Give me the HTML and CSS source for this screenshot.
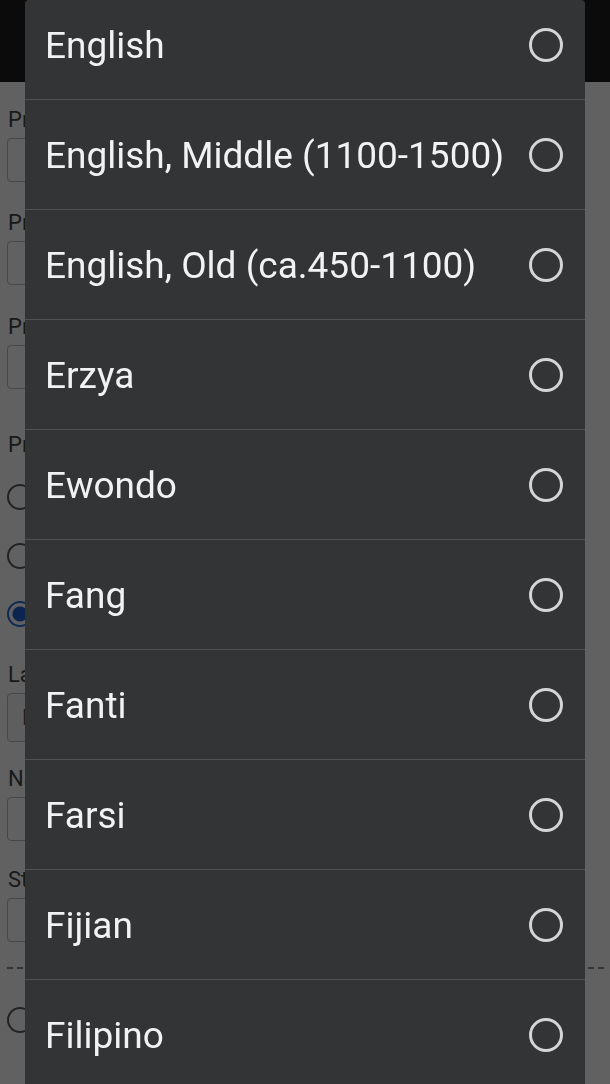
FILE: index.html
```html
<!DOCTYPE html>
<html lang="en">
<head>
<meta charset="utf-8">
<title>Language</title>
<link rel="stylesheet" href="styles.css">
</head>
<body>
<div class="page">
  <header class="topbar"></header>
  <form class="form">
    <label class="lbl l1">Preferred name</label>
    <div class="input"></div>
    <label class="lbl l2">Pronouns</label>
    <div class="input"></div>
    <label class="lbl l3">Preferred contact</label>
    <div class="input"></div>
    <label class="lbl l4">Primary method</label>
    <div class="radio r1"></div>
    <div class="radio r2"></div>
    <div class="radio r3 on"></div>
    <label class="lbl l5">Language</label>
    <div class="input select"><span class="val">F</span></div>
    <label class="lbl l6">Nationality</label>
    <div class="input"></div>
    <label class="lbl l7">Status</label>
    <div class="input"></div>
    <div class="dash"></div>
    <div class="radio r4"></div>
  </form>
</div>
<div class="scrim"></div>
<div class="dialog">
  <ul class="list">
    <li class="row"><span class="name">English</span><span class="rb"></span></li>
    <li class="row"><span class="name">English, Middle (1100-1500)</span><span class="rb"></span></li>
    <li class="row"><span class="name">English, Old (ca.450-1100)</span><span class="rb"></span></li>
    <li class="row"><span class="name">Erzya</span><span class="rb"></span></li>
    <li class="row"><span class="name">Ewondo</span><span class="rb"></span></li>
    <li class="row"><span class="name">Fang</span><span class="rb"></span></li>
    <li class="row"><span class="name">Fanti</span><span class="rb"></span></li>
    <li class="row"><span class="name">Farsi</span><span class="rb"></span></li>
    <li class="row"><span class="name">Fijian</span><span class="rb"></span></li>
    <li class="row"><span class="name">Filipino</span><span class="rb"></span></li>
  </ul>
</div>
</body>
</html>
```
FILE: styles.css
```css
html, body {
  margin: 0;
  padding: 0;
  height: 100%;
  overflow: hidden;
  background: #ffffff;
  font-family: Roboto, "Noto Sans", sans-serif;
}
.page {
  display: flex;
  flex-direction: column;
}
.topbar {
  height: 82px;
  background: #1d1d1d;
}
.form {
  display: flex;
  flex-direction: column;
  padding: 25px 7px 0 7px;
}
.lbl {
  display: block;
  font-size: 22px;
  line-height: 26px;
  height: 26px;
  color: #444444;
  padding-left: 1px;
}
.input {
  height: 42px;
  border: 1px solid #bdbdbd;
  border-radius: 4px;
  margin-top: 5px;
  width: 560px;
  box-sizing: content-box;
}
.select {
  height: 47px;
  display: flex;
  align-items: center;
  padding-left: 14px;
  width: 546px;
  background: #f6f6f6;
}
.val {
  font-size: 22px;
  color: #555;
}
.l2 { margin-top: 28px; }
.l3 { margin-top: 29px; }
.l4 { margin-top: 43px; }
.l5 { margin-top: 35px; }
.l6 { margin-top: 24px; }
.l7 { margin-top: 26px; }
.radio {
  width: 22px;
  height: 22px;
  border: 2px solid #5a5a5a;
  border-radius: 50%;
}
.r1 { margin-top: 26px; }
.r2 { margin-top: 33px; }
.r3 { margin-top: 32px; }
.on {
  border-color: #2b6fd8;
  background: radial-gradient(circle, #1f63d2 0 7px, #ffffff 8px);
}
.dash {
  margin-top: 25px;
  width: 597px;
  border-top: 2px dashed #8a8a8a;
}
.r4 { margin-top: 38px; }
.scrim {
  position: fixed;
  inset: 0;
  background: rgba(0, 0, 0, 0.62);
}
.dialog {
  position: fixed;
  left: 25px;
  width: 560px;
  top: 0;
  bottom: 0;
  background: #333436;
  border-radius: 4px 4px 0 0;
  overflow: hidden;
}
.list {
  list-style: none;
  margin: -10px 0 0 0;
  padding: 0;
}
.row {
  height: 109px;
  border-bottom: 1px solid #505153;
  display: flex;
  align-items: center;
  justify-content: space-between;
  padding: 0 22px 0 20px;
}
.name {
  font-size: 37px;
  color: #f2f2f2;
  white-space: nowrap;
  padding-top: 2px;
}
.rb {
  flex: none;
  width: 28px;
  height: 28px;
  border: 3px solid #d5d5d5;
  border-radius: 50%;
}
```
